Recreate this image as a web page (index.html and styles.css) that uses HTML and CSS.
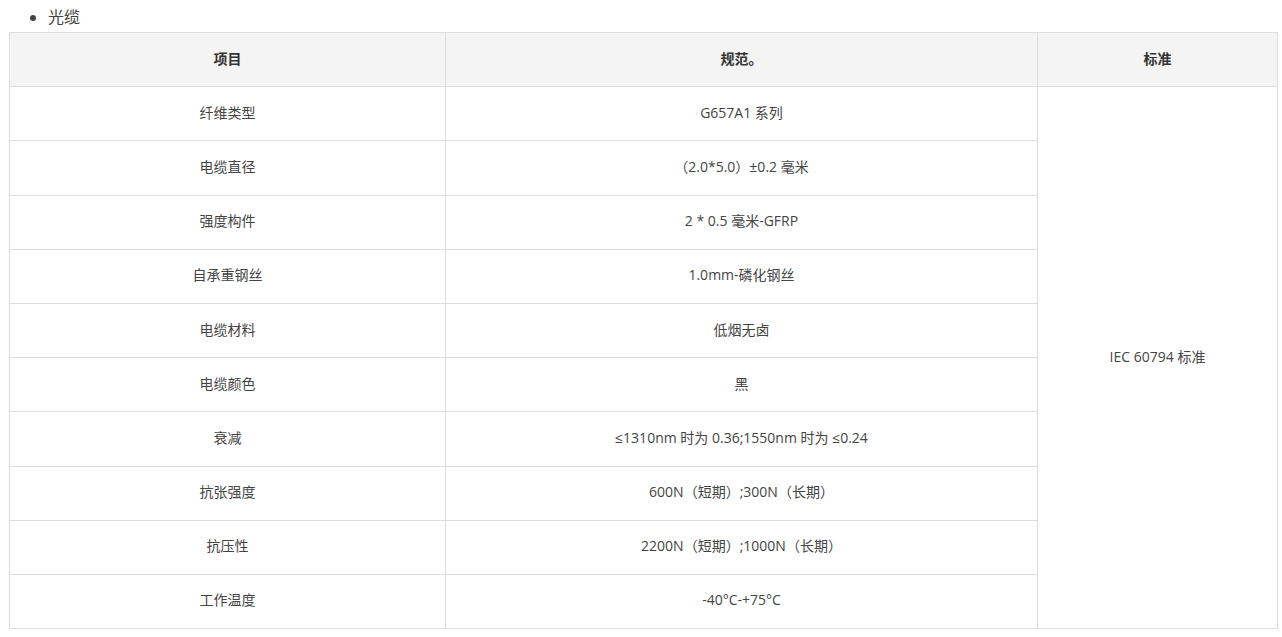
FILE: index.html
```html
<!DOCTYPE html>
<html lang="zh">
<head>
<meta charset="utf-8">
<link rel="stylesheet" href="styles.css">
</head>
<body>
<div class="page">
  <ul class="list">
    <li>光缆</li>
  </ul>
  <table class="spec">
    <colgroup>
      <col class="c1"><col class="c2"><col class="c3">
    </colgroup>
    <thead>
      <tr><th>项目</th><th>规范。</th><th>标准</th></tr>
    </thead>
    <tbody>
      <tr><td>纤维类型</td><td>G657A1 系列</td><td rowspan="10">IEC 60794 标准</td></tr>
      <tr><td>电缆直径</td><td>（2.0*5.0）±0.2 毫米</td></tr>
      <tr><td>强度构件</td><td>2 * 0.5 毫米-GFRP</td></tr>
      <tr><td>自承重钢丝</td><td>1.0mm-磷化钢丝</td></tr>
      <tr><td>电缆材料</td><td>低烟无卤</td></tr>
      <tr><td>电缆颜色</td><td>黑</td></tr>
      <tr><td>衰减</td><td>≤1310nm 时为 0.36;1550nm 时为 ≤0.24</td></tr>
      <tr><td>抗张强度</td><td>600N（短期）;300N（长期）</td></tr>
      <tr><td>抗压性</td><td>2200N（短期）;1000N（长期）</td></tr>
      <tr><td>工作温度</td><td>-40°C-+75°C</td></tr>
    </tbody>
  </table>
</div>
</body>
</html>
```
FILE: styles.css
```css
html, body {
  margin: 0;
  padding: 0;
  background: #fff;
}
.page {
  padding: 7px 0 0 9px;
  font-family: "Open Sans", "Noto Sans CJK SC", sans-serif;
  color: #444;
}
.list {
  margin: 0 0 5px 0;
  padding-left: 39px;
  font-size: 16px;
  line-height: 20px;
  color: #444;
}
.spec {
  width: 1268px;
  border-collapse: collapse;
  table-layout: fixed;
  font-size: 14px;
}
.c1 { width: 436px; }
.c2 { width: 592px; }
.c3 { width: 240px; }
.spec th, .spec td {
  border: 1px solid #dddddd;
  text-align: center;
  vertical-align: middle;
  padding: 0 8px 4px;
  height: 54.2px;
  box-sizing: border-box;
}
.spec th {
  background: #f4f4f4;
  font-weight: 700;
  color: #333;
}
.spec td {
  color: #444;
}
```
